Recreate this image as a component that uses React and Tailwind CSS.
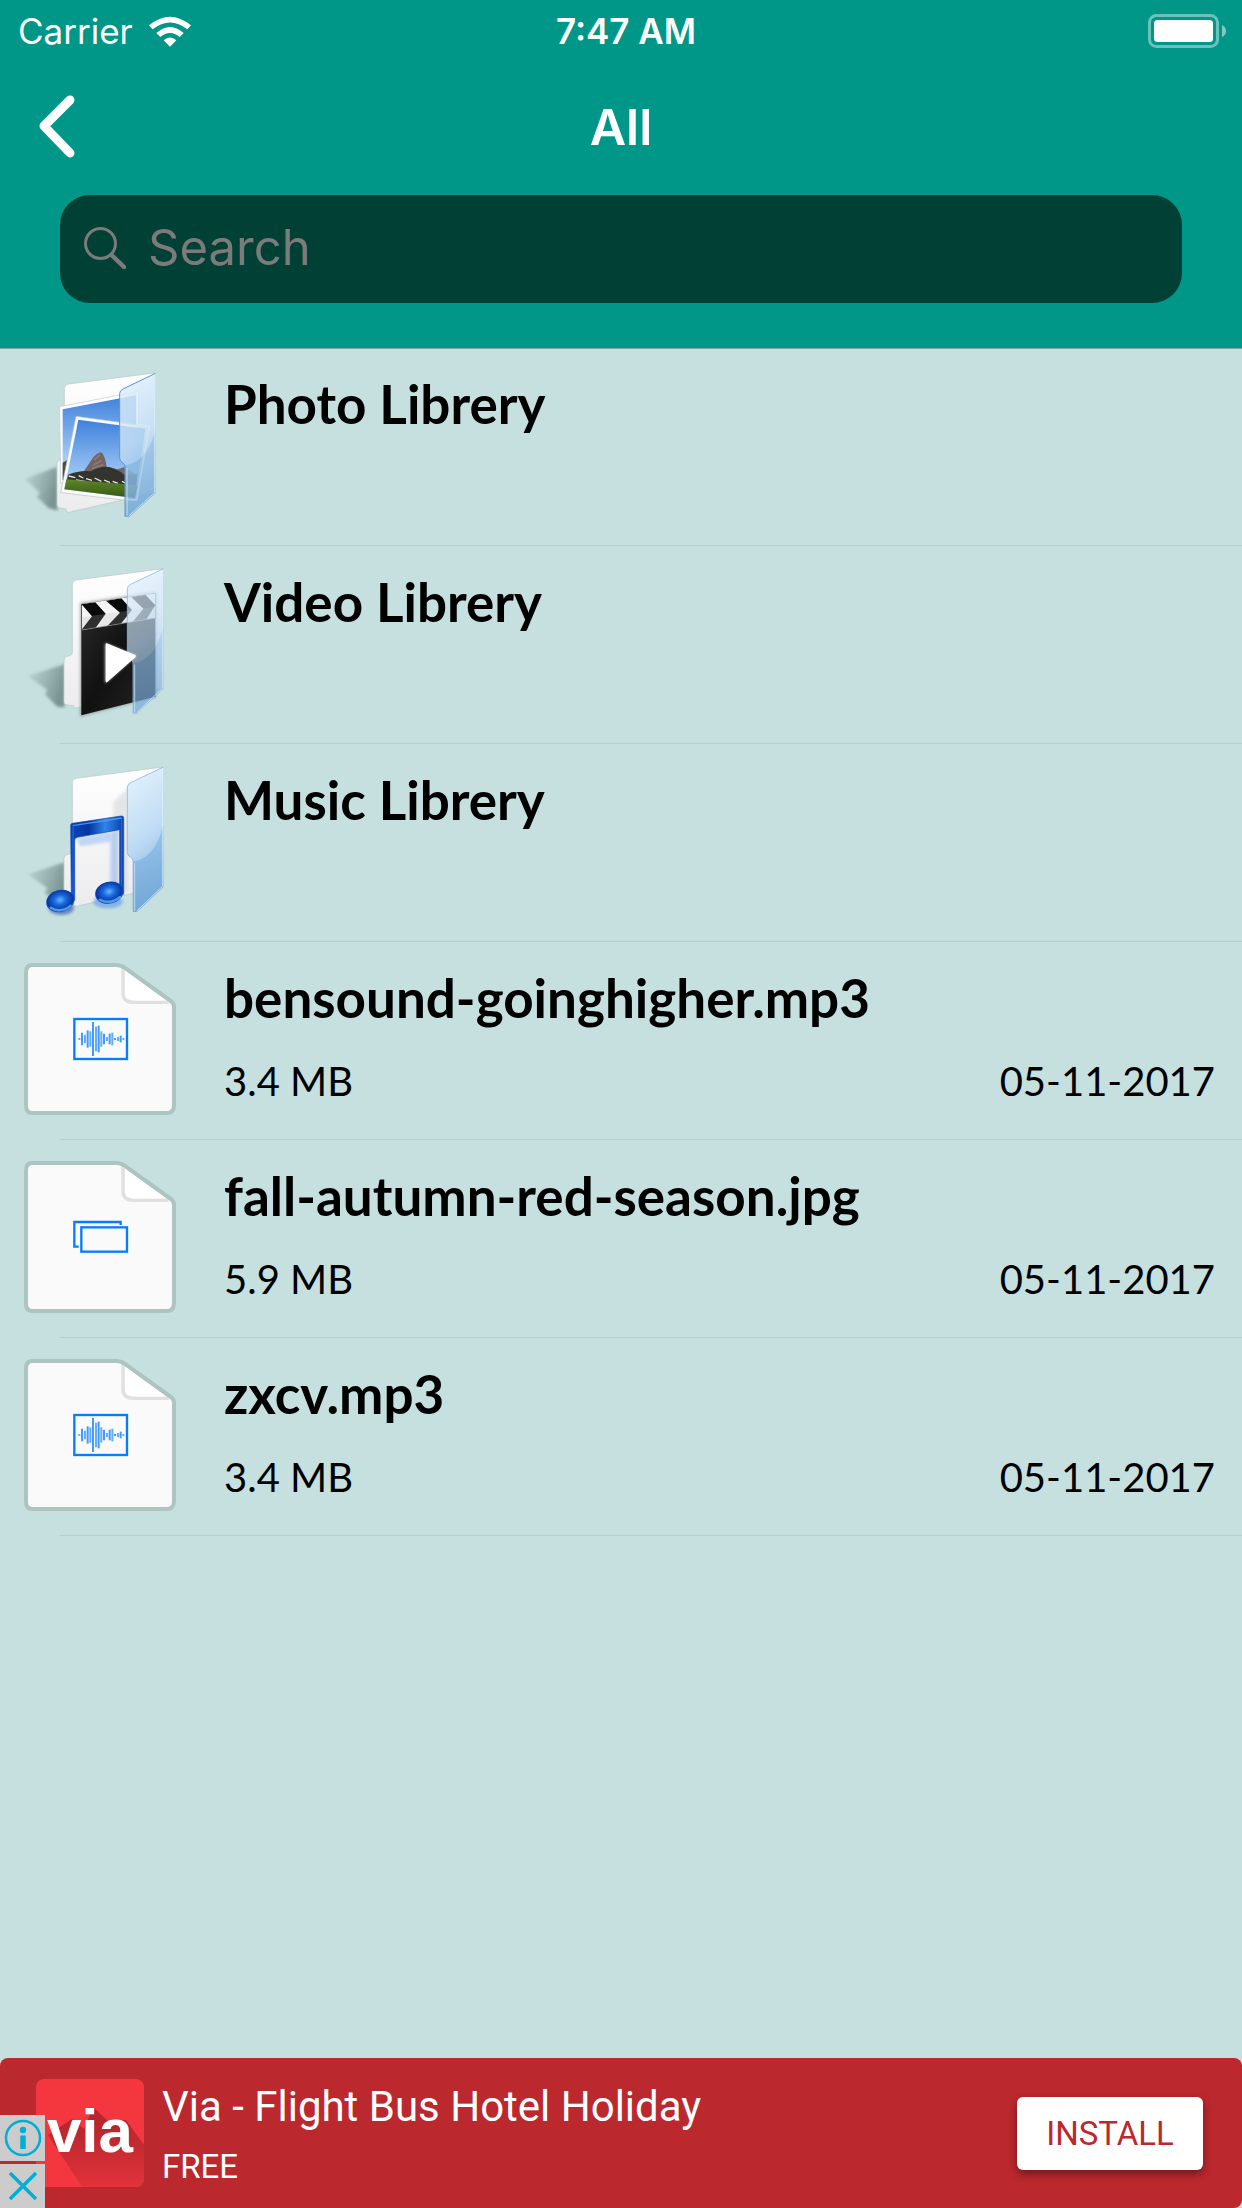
import React from "react";

function PanelDefs({ id }) {
  return (
    <defs>
      <linearGradient id={`${id}-back`} x1="0" y1="0" x2="0" y2="1">
        <stop offset="0" stopColor="#ffffff" />
        <stop offset="1" stopColor="#ececee" />
      </linearGradient>
      <linearGradient id={`${id}-glass`} x1="0" y1="0" x2="0.2" y2="1">
        <stop offset="0" stopColor="#e6f4fd" />
        <stop offset="0.55" stopColor="#bfdcf4" />
        <stop offset="1" stopColor="#7fb0de" />
      </linearGradient>
      <linearGradient id={`${id}-low`} x1="0" y1="0" x2="0" y2="1">
        <stop offset="0" stopColor="#8bbce8" />
        <stop offset="1" stopColor="#6fa5d4" />
      </linearGradient>
      <linearGradient id={`${id}-shadow`} x1="0" y1="0" x2="1" y2="0.4">
        <stop offset="0" stopColor="#6f8f8b" stopOpacity="0.15" />
        <stop offset="1" stopColor="#4f6b68" stopOpacity="0.65" />
      </linearGradient>
      <filter id={`${id}-soft`} x="-20%" y="-20%" width="140%" height="140%">
        <feGaussianBlur stdDeviation="5" />
      </filter>
    </defs>
  );
}

function FolderBack({ id }) {
  return (
    <g>
      <path
        d="M84 378 L194 342 V472 L172 470 L134 432 L142 420 Z"
        fill={`url(#${id}-shadow)`}
        filter={`url(#${id}-soft)`}
      />
      <path
        d="M217 102 Q218 92 229 90 L489 56 V414 L230 474 L222 474 L221 467 L197 464 Q192 462 192 455 V330 Q192 322 200 319 L212 316 Q217 314 217 306 Z"
        fill={`url(#${id}-back)`}
        stroke="#b9c6c6"
        strokeWidth="2"
      />
    </g>
  );
}

function FolderGlass({ id, opacity = 1 }) {
  return (
    <g>
      <g opacity={opacity}>
        <path
          d="M382 116 Q383 107 392 103 L490 56 V416 L410 491 L399 490 V340 Q399 330 392 327 Q382 322 382 312 Z"
          fill={`url(#${id}-glass)`}
        />
        <path d="M490 230 V416 L410 491 L399 490 V340 Q465 330 490 230 Z" fill={`url(#${id}-low)`} opacity="0.75" />
      </g>
      <path
        d="M490 56 L392 103 Q383 107 382 116 V312 Q382 322 392 327 Q399 330 399 340 V490"
        fill="none"
        stroke="#8fb2dc"
        strokeWidth="3"
        opacity="0.8"
      />
      <path d="M488 60 V414 L410 488" fill="none" stroke="#e3f2fd" strokeWidth="3" opacity="0.7" />
      <path d="M404 344 V488" stroke="#c7e0f5" strokeWidth="3" opacity="0.8" />
    </g>
  );
}

function PhotoFolder() {
  return (
    <svg viewBox="72 57 456 456" className="size-[152px] shrink-0" aria-hidden="true">
      <PanelDefs id="photo" />
      <defs>
        <linearGradient id="sky" x1="0" y1="0" x2="0" y2="1">
          <stop offset="0" stopColor="#3f80dc" />
          <stop offset="0.75" stopColor="#a5cdf4" />
        </linearGradient>
        <linearGradient id="grass" x1="0" y1="0" x2="0" y2="1">
          <stop offset="0" stopColor="#5f852c" />
          <stop offset="1" stopColor="#35590f" />
        </linearGradient>
      </defs>
      <path d="M74 386 L172 350 V482 L146 474 L110 440 L120 428 Z" fill="url(#photo-shadow)" filter="url(#photo-soft)" />
      <path
        d="M193 116 Q194 104 206 102 L464 69 V428 L206 487 L200 486 L198 477 L177 473 Q171 470 171 464 V338 Q171 332 180 330 L193 324 Z"
        fill="url(#photo-back)"
        stroke="#b9c6c6"
        strokeWidth="2"
      />
      <path d="M179 170 L416 124 V400 L182 400 Z" fill="#ffffff" stroke="#c3c9cc" strokeWidth="2" />
      <path d="M188 178 L408 136 V390 H188 Z" fill="url(#sky)" />
      <path d="M188 338 L206 328 L206 390 H188 Z" fill="#4a4e42" />
      <path d="M228 199 L448 229 L412 455 L182 428 Z" fill="#f8fafb" stroke="#b8bfc4" strokeWidth="2" />
      <path d="M235 209 L436 236 L404 445 L193 418 Z" fill="url(#sky)" />
      <path d="M250 366 Q268 340 280 322 Q296 304 306 308 Q316 320 320 350 L352 358 L372 352 L410 374 L408 400 H220 Z" fill="#746462" />
      <path d="M282 330 L300 314 M280 345 L304 332 M276 356 L310 344" stroke="#94807c" strokeWidth="4" />
      <path d="M204 374 Q240 360 272 364 Q304 346 330 352 Q356 360 372 374 L412 372 L408 412 L200 396 Z" fill="#34342f" />
      <path
        d="M206 378 L226 383 M236 377 L250 384 M258 386 L276 391 M284 384 L304 394 M312 390 L330 398 M338 394 L354 400 M228 390 L262 396 M366 394 L382 402"
        stroke="#e9e6e2"
        strokeWidth="4"
      />
      <path d="M199 388 L412 406 L405 444 L193 418 Z" fill="url(#grass)" />
      <g opacity="0.86">
        <path
          d="M359 130 Q360 121 369 117 L466 70 V430 L386 502 L375 500 V352 Q375 342 369 339 Q359 334 359 324 Z"
          fill="url(#photo-glass)"
        />
        <path d="M466 240 V430 L386 502 L375 500 V346 Q442 336 466 240 Z" fill="url(#photo-low)" opacity="0.7" />
      </g>
      <path d="M412 126 V224 L448 230 L410 450 L376 448 M362 224 L412 230" fill="none" stroke="#ffffff" strokeWidth="5" opacity="0.28" />
      <path
        d="M466 70 L369 117 Q360 121 359 130 V324 Q359 334 369 339 Q375 342 375 352 V500"
        fill="none"
        stroke="#5f94d2"
        strokeWidth="3"
      />
      <path d="M464 76 V428 L386 498 M381 354 V496" fill="none" stroke="#e3f2fd" strokeWidth="3" opacity="0.7" />
    </svg>
  );
}

function VideoFolder() {
  return (
    <svg viewBox="72 51 456 456" className="size-[152px] shrink-0" aria-hidden="true">
      <PanelDefs id="video" />
      <defs>
        <linearGradient id="slate" x1="0" y1="0" x2="1" y2="1">
          <stop offset="0" stopColor="#2c2c2c" />
          <stop offset="0.5" stopColor="#111111" />
          <stop offset="1" stopColor="#262626" />
        </linearGradient>
        <clipPath id="clapper">
          <path d="M246 162 L466 130 V204 L246 240 Z" />
        </clipPath>
      </defs>
      <FolderBack id="video" />
      <path d="M240 158 L468 126 V442 L240 500 Z" fill="#6d7577" opacity="0.55" filter="url(#video-soft)" />
      <path d="M244 162 L466 130 V440 L244 496 Z" fill="url(#slate)" />
      <g clipPath="url(#clapper)">
        <path d="M244 158 L470 124 V210 L244 244 Z" fill="#f4f4f4" />
        <path d="M244 162 L286 157 L317 191 L286 235 L244 240 L276 199 Z" fill="#0a0a0a" />
        <path d="M318 152 L364 145 L396 180 L362 222 L322 228 L360 188 Z" fill="#0a0a0a" />
        <path d="M394 141 L436 134 L466 166 L438 210 L398 216 L430 176 Z" fill="#1c1c1c" />
        <path d="M246 202 L466 170 V204 L246 240 Z" fill="#b8b8b8" opacity="0.22" />
      </g>
      <path d="M246 240 L466 204" stroke="#8b8b8b" strokeWidth="2" />
      <FolderGlass id="video" opacity={0.68} />
      <path d="M315 279 L408 318 L315 400 Z" fill="#ffffff" opacity="0.7" filter="url(#video-soft)" />
      <path d="M317 282 Q318 278 324 281 L406 315 Q410 318 406 322 L322 396 Q317 400 317 393 Z" fill="#ffffff" />
    </svg>
  );
}

function MusicFolder() {
  return (
    <svg viewBox="72 60 456 456" className="size-[152px] shrink-0" aria-hidden="true">
      <PanelDefs id="music" />
      <defs>
        <radialGradient id="note" cx="0.5" cy="0.45" r="0.6">
          <stop offset="0" stopColor="#5eb8ff" />
          <stop offset="0.35" stopColor="#1b69dd" />
          <stop offset="0.75" stopColor="#0637a4" />
          <stop offset="1" stopColor="#2a7fe8" />
        </radialGradient>
        <linearGradient id="beam" x1="0" y1="0" x2="1" y2="0">
          <stop offset="0" stopColor="#0a46b8" />
          <stop offset="0.35" stopColor="#0636a0" />
          <stop offset="0.65" stopColor="#2e86ea" />
          <stop offset="1" stopColor="#0a3fae" />
        </linearGradient>
      </defs>
      <g transform="translate(0 10)">
        <FolderBack id="music" />
      </g>
      <path d="M340 170 L384 130 V440 L340 446 Z" fill="#c9cdd2" opacity="0.45" filter="url(#music-soft)" />
      <path d="M230 280 L352 256 V420 L330 408 V290 L240 304 Z" fill="#7fb0f0" opacity="0.45" filter="url(#music-soft)" />
      <g transform="translate(0 10)">
        <FolderGlass id="music" />
      </g>
      <ellipse cx="184" cy="490" rx="38" ry="20" fill="#1c3fa0" opacity="0.55" filter="url(#music-soft)" />
      <ellipse cx="324" cy="470" rx="44" ry="20" fill="#5e93e6" opacity="0.6" filter="url(#music-soft)" />
      <path
        d="M212 240 Q212 236 217 235 L364 213 Q371 212 371 219 V448 L359 440 V254 L232 277 Q224 279 224 286 V466 L214 458 Z"
        fill="url(#beam)"
        stroke="#0c49c0"
        strokeWidth="2"
      />
      <path d="M218 242 L366 219" stroke="#5aa4f5" strokeWidth="4" opacity="0.8" />
      <path d="M219 246 V450 M365 224 V430" stroke="#2875e8" strokeWidth="3" opacity="0.8" />
      <ellipse cx="181" cy="468" rx="43" ry="33" transform="rotate(-14 181 468)" fill="url(#note)" />
      <ellipse cx="328" cy="443" rx="43" ry="33" transform="rotate(-14 328 443)" fill="url(#note)" />
      <path d="M152 488 Q182 506 212 482 M300 464 Q330 480 360 456" stroke="#6fc0ff" strokeWidth="7" fill="none" opacity="0.7" strokeLinecap="round" />
    </svg>
  );
}

function Sheet({ children }) {
  return (
    <svg viewBox="72 54 456 456" className="size-[152px] shrink-0" aria-hidden="true">
      <path
        d="M98 60 H350 Q362 60 372 67 L514 169 Q522 175 522 186 V480 Q522 504 500 504 H98 Q78 504 78 482 V82 Q78 60 98 60 Z"
        fill="#fafafa"
        stroke="#adc5c1"
        strokeWidth="12"
      />
      <path d="M375 76 L498 167 H400 Q375 166 375 142 Z" fill="#ffffff" />
      <path d="M369 72 V146 Q370 172 400 172 H506" fill="none" stroke="#e0e0e0" strokeWidth="10" />
      <path d="M362 62 Q367 63 372 67 L514 169" fill="none" stroke="#adc5c1" strokeWidth="11" />
      {children}
    </svg>
  );
}

const WAVE = [
  [238, 3], [246, 19], [255, 13], [263, 26], [271, 23], [279, 51], [288, 37], [296, 40], [304, 23],
  [312, 16], [321, 6], [329, 16], [337, 19], [345, 3], [354, 6], [362, 10], [370, 3],
];

function AudioFile() {
  return (
    <Sheet>
      <rect x="223" y="222" width="158" height="120" fill="none" stroke="#067dff" strokeWidth="7" />
      {WAVE.map(([x, h], i) => (
        <path key={x} d={`M${x} ${282 - h} V${282 + h}`} stroke={i % 2 ? "#3f9bff" : "#62adff"} strokeWidth="6" />
      ))}
    </Sheet>
  );
}

function ImageFile() {
  return (
    <Sheet>
      <path d="M236 311 H223 V237 H362 V246" fill="none" stroke="#067dff" strokeWidth="7" />
      <rect x="244" y="253" width="137" height="73" fill="none" stroke="#067dff" strokeWidth="7" />
    </Sheet>
  );
}

const ITEMS = [
  { name: "Photo Librery", Icon: PhotoFolder },
  { name: "Video Librery", Icon: VideoFolder },
  { name: "Music Librery", Icon: MusicFolder },
  { name: "bensound-goinghigher.mp3", Icon: AudioFile, size: "3.4 MB", date: "05-11-2017" },
  { name: "fall-autumn-red-season.jpg", Icon: ImageFile, size: "5.9 MB", date: "05-11-2017" },
  { name: "zxcv.mp3", Icon: AudioFile, size: "3.4 MB", date: "05-11-2017" },
];

function StatusBar() {
  return (
    <div className="grid h-[62px] grid-cols-[1fr_auto_1fr] items-center pr-2 pl-[18px] text-[35px] leading-[40px]">
      <div className="flex items-center gap-4">
        <span>Carrier</span>
        <svg viewBox="450 43 126 93" className="h-[31px] w-[42px]" fill="currentColor" aria-label="Wi-Fi">
          <path d="M450 71 Q513 19 576 71 L565 83 Q513 42 461 83 Z" />
          <path d="M472 94 Q513 58 554 94 L542 106 Q513 82 484 106 Z" />
          <path d="M494 116 Q513 99 532 116 L513 135 Z" />
        </svg>
      </div>
      <span className="text-center font-semibold">7:47 AM</span>
      <svg viewBox="0 0 78 34" className="mr-2 h-[34px] w-[78px] justify-self-end" aria-label="Battery full">
        <rect x="1.5" y="1.5" width="68" height="31" rx="7" fill="none" stroke="#ffffff" strokeOpacity="0.42" strokeWidth="3" />
        <rect x="6" y="6" width="59" height="22" rx="3.5" fill="#ffffff" />
        <path d="M74 11 Q78 13 78 17 Q78 21 74 23 Z" fill="#ffffff" fillOpacity="0.5" />
      </svg>
    </div>
  );
}

function Header() {
  return (
    <header className="border-b border-[#8b9f9c] bg-[#009788] font-['Inter',sans-serif] text-white">
      <StatusBar />
      <div className="grid h-[129px] grid-cols-[100px_1fr_100px] items-center">
        <button type="button" aria-label="Back" className="flex h-full items-center pl-[38px]">
          <svg viewBox="0 0 37 63" className="h-[63px] w-[37px]" aria-hidden="true">
            <path d="M32 5 L6 31 L32 58" fill="none" stroke="currentColor" strokeWidth="9" strokeLinecap="round" strokeLinejoin="round" />
          </svg>
        </button>
        <h1 className="text-center text-[50px] leading-[60px] font-semibold">All</h1>
      </div>
      <div className="px-[60px] pt-1 pb-[45px]">
        <label className="flex h-[108px] items-center gap-[22px] rounded-[30px] bg-[#014135] px-6 pb-0.5">
          <svg viewBox="0 0 42 42" className="size-[42px] shrink-0 text-[#7b7b7b]" fill="none" stroke="currentColor" aria-hidden="true">
            <circle cx="16.5" cy="16.5" r="15" strokeWidth="3" />
            <path d="M27.5 28 L40 40" strokeWidth="4.5" strokeLinecap="round" />
          </svg>
          <input
            type="search"
            aria-label="Search"
            placeholder="Search"
            className="min-w-0 flex-1 bg-transparent text-[49px] leading-[60px] text-white outline-none placeholder:text-[#7b7b7b]"
          />
        </label>
      </div>
    </header>
  );
}

function Row({ name, Icon, size, date }) {
  return (
    <li>
      <button type="button" className="flex h-[197px] w-full gap-12 pt-[21px] pr-[27px] pl-6 text-left">
        <Icon />
        <span className="flex min-w-0 flex-1 flex-col gap-7 pt-[5px]">
          <span className="text-[53px] leading-[60px] font-bold">{name}</span>
          {size && (
            <span className="flex justify-between text-[40px] leading-[50px]">
              <span>{size}</span>
              <span>{date}</span>
            </span>
          )}
        </span>
      </button>
      <div className="ml-[60px] h-px bg-[#c3c9ca]" />
    </li>
  );
}

function AdBanner() {
  return (
    <aside className="relative mt-auto flex h-[150px] items-center rounded-lg bg-[#bb282e] pr-[39px] pl-9 font-['Roboto',sans-serif] text-white">
      <div className="relative flex size-[108px] shrink-0 items-center justify-center overflow-hidden rounded-lg bg-[#f4373f]">
        <svg viewBox="0 0 108 108" className="absolute inset-0 size-full" aria-hidden="true">
          <defs>
            <linearGradient id="cast" x1="0" y1="0" x2="0" y2="1">
              <stop offset="0.25" stopColor="#b8272e" />
              <stop offset="1" stopColor="#e2323a" />
            </linearGradient>
          </defs>
          <path d="M57 28 L72 42 L90 41 L108 66 V108 H46 L12 56 L36 40 L48 50 Z" fill="url(#cast)" />
        </svg>
        <span className="relative pb-1 font-['Liberation_Sans',sans-serif] text-[62px] leading-[70px] font-bold">via</span>
      </div>
      <div className="flex min-w-0 flex-1 flex-col gap-2.5 pt-2 pl-[18px]">
        <p className="text-[42px] leading-[50px]">Via - Flight Bus Hotel Holiday</p>
        <p className="text-[33px] leading-[50px]">FREE</p>
      </div>
      <button type="button" className="h-[73px] w-[186px] rounded-md bg-white pt-0.5 text-[33px] leading-[40px] text-[#bb282e] shadow-[0_4px_8px_rgba(0,0,0,0.4)]">
        INSTALL
      </button>
      <div className="absolute bottom-0 left-0 flex flex-col gap-[3px] text-[#00aed6]">
        <button type="button" aria-label="About this ad" className="flex h-[46px] w-[45px] items-center justify-center bg-[#cccccc]">
          <svg viewBox="0 0 38 38" className="size-[38px]" aria-hidden="true">
            <circle cx="19" cy="19" r="17" fill="none" stroke="currentColor" strokeWidth="2.5" />
            <circle cx="19" cy="11" r="3.2" fill="currentColor" />
            <path d="M19 16.5 V30" stroke="currentColor" strokeWidth="5.5" />
          </svg>
        </button>
        <button type="button" aria-label="Close ad" className="flex h-[44px] w-[45px] items-center justify-center bg-[#cccccc]">
          <svg viewBox="0 0 30 30" className="size-[30px]" aria-hidden="true">
            <path d="M2 2 L28 28 M28 2 L2 28" stroke="currentColor" strokeWidth="3.5" />
          </svg>
        </button>
      </div>
    </aside>
  );
}

export default function App() {
  return (
    <div className="flex min-h-screen flex-col bg-[#c6e0df] font-['Lato',sans-serif] text-black">
      <Header />
      <main className="-mt-px">
        <ul>
          {ITEMS.map((item) => (
            <Row key={item.name} {...item} />
          ))}
        </ul>
      </main>
      <AdBanner />
    </div>
  );
}
